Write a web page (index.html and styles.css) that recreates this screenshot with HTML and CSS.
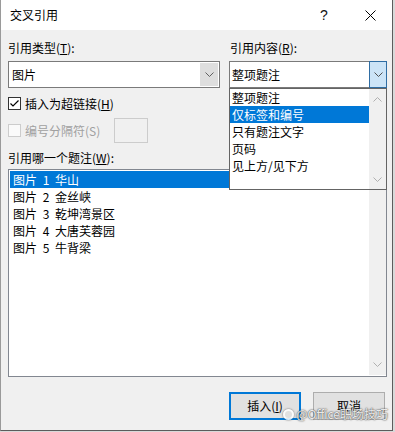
FILE: index.html
```html
<!DOCTYPE html>
<html lang="zh-CN">
<head>
<meta charset="utf-8">
<title>交叉引用</title>
<link rel="stylesheet" href="styles.css">
</head>
<body>
<div class="dialog">
  <div class="titlebar">
    <span class="title">交叉引用</span>
    <span class="tb-btn help">?</span>
    <span class="tb-btn close"><svg width="11" height="11" viewBox="0 0 11 11"><path d="M0.5 0.5 L10.5 10.5 M10.5 0.5 L0.5 10.5" stroke="#000" stroke-width="1" fill="none"/></svg></span>
  </div>
  <div class="content">
    <div class="top-grid">
      <div class="field">
        <div class="label">引用类型(<u>T</u>):</div>
        <div class="combo">
          <span class="combo-text">图片</span>
          <span class="combo-btn"><svg width="9" height="5" viewBox="0 0 9 5"><path d="M0.5 0.5 L4.5 4.5 L8.5 0.5" stroke="#606060" fill="none"/></svg></span>
        </div>
      </div>
      <div class="field">
        <div class="label">引用内容(<u>R</u>):</div>
        <div class="combo open">
          <span class="combo-text">整项题注</span>
          <span class="combo-btn pressed"><svg width="9" height="5" viewBox="0 0 9 5"><path d="M0.5 0.5 L4.5 4.5 L8.5 0.5" stroke="#505050" fill="none"/></svg></span>
          <div class="dropdown">
            <ul class="items">
              <li>整项题注</li>
              <li class="sel">仅标签和编号</li>
              <li>只有题注文字</li>
              <li>页码</li>
              <li>见上方/见下方</li>
            </ul>
            <div class="vscroll dd-scroll">
              <span class="sb-arrow"><svg width="9" height="5" viewBox="0 0 9 5"><path d="M0.5 4.5 L4.5 0.5 L8.5 4.5" stroke="#b0b0b0" fill="none"/></svg></span>
              <span class="sb-arrow"><svg width="9" height="5" viewBox="0 0 9 5"><path d="M0.5 0.5 L4.5 4.5 L8.5 0.5" stroke="#b0b0b0" fill="none"/></svg></span>
            </div>
          </div>
        </div>
      </div>
    </div>

    <div class="check-row">
      <span class="cb checked"><svg width="11" height="11" viewBox="0 0 11 11"><path d="M1.5 5.5 L4 8 L9.5 2.5" stroke="#000" stroke-width="1.2" fill="none"/></svg></span>
      <span class="cb-label">插入为超链接(<u>H</u>)</span>
    </div>
    <div class="check-row sep-row disabled">
      <span class="cb"></span>
      <span class="cb-label">编号分隔符(S)</span>
      <span class="sep-box"></span>
    </div>

    <div class="label list-label">引用哪一个题注(<u>W</u>):</div>
    <div class="listbox">
      <ul class="items">
        <li class="sel">图片 1 华山</li>
        <li>图片 2 金丝峡</li>
        <li>图片 3 乾坤湾景区</li>
        <li>图片 4 大唐芙蓉园</li>
        <li>图片 5 牛背梁</li>
      </ul>
      <div class="vscroll list-scroll">
        <span class="sb-arrow"><svg width="9" height="5" viewBox="0 0 9 5"><path d="M0.5 4.5 L4.5 0.5 L8.5 4.5" stroke="#b0b0b0" fill="none"/></svg></span>
        <span class="sb-arrow"><svg width="9" height="5" viewBox="0 0 9 5"><path d="M0.5 0.5 L4.5 4.5 L8.5 0.5" stroke="#b0b0b0" fill="none"/></svg></span>
      </div>
    </div>

    <div class="buttons">
      <button class="btn default">插入(<u>I</u>)</button>
      <button class="btn">取消</button>
    </div>
  </div>
  <div class="watermark"><span class="wm-logo"></span>@Office职场技巧</div>
</div>
</body>
</html>
```
FILE: styles.css
```css
* { box-sizing: border-box; }
html, body { margin: 0; padding: 0; }
body {
  width: 395px;
  height: 432px;
  overflow: hidden;
  background: #d9d9d9;
  font-family: "Noto Sans CJK SC", "Microsoft YaHei", sans-serif;
  font-size: 12px;
  color: #000;
}
u { text-decoration: underline; text-underline-offset: 1px; }

.dialog {
  position: relative;
  width: 393px;
  height: 431px;
  background: #f0f0f0;
  border-left: 1px solid #9a9a9a;
  border-right: 1px solid #5c5c5c;
  border-bottom: 1px solid #5c5c5c;
  display: flex;
  flex-direction: column;
}

.titlebar {
  height: 30px;
  background: #fff;
  display: flex;
  align-items: center;
  flex: none;
}
.title { padding-left: 9px; font-size: 12px; line-height: 16px; }
.tb-btn {
  width: 46px;
  height: 30px;
  display: flex;
  align-items: center;
  justify-content: center;
}
.help { margin-left: auto; font-size: 14px; font-family: "Liberation Sans", sans-serif; color: #111; }
.close { margin-right: -1px; }

.content {
  padding: 10px 0 0 7px;
  width: 386px;
  display: flex;
  flex-direction: column;
}

.label { line-height: 16px; height: 16px; white-space: nowrap; }

.top-grid {
  display: grid;
  grid-template-columns: 212px 158px;
  column-gap: 9px;
}
.field { display: flex; flex-direction: column; }
.field:last-child .label { padding-left: 1px; }

.combo {
  position: relative;
  margin-top: 5px;
  height: 27px;
  border: 1px solid #7a7a7a;
  background: #fff;
  display: flex;
  align-items: stretch;
}
.combo-text { flex: 1; padding-left: 3px; line-height: 25px; }
.combo.open .combo-text { padding-left: 2px; }
.combo-btn {
  width: 18px;
  margin: 1px 1px 1px 0;
  background: #dedede;
  display: flex;
  align-items: center;
  justify-content: center;
}
.combo-btn.pressed {
  width: 18px;
  margin: -1px -1px -1px 0;
  background: #cce4f7;
  border: 1px solid #2f6da3;
}

.dropdown {
  position: absolute;
  top: 26px;
  left: -1px;
  width: 158px;
  height: 102px;
  background: #fff;
  border: 1px solid #646464;
  display: flex;
  z-index: 5;
}
.items { list-style: none; margin: 0; padding: 0; flex: 1; }
.items li { height: 17px; line-height: 17px; white-space: nowrap; }
.dropdown .items li { padding-left: 2px; }
.items li.sel { background: #0078d7; color: #fff; }

.vscroll {
  width: 17px;
  background: #f0f0f0;
  display: flex;
  flex-direction: column;
  justify-content: space-between;
  align-items: center;
}
.dd-scroll { padding: 8px 0 7px; }
.list-scroll { padding: 7px 0 8px; }
.sb-arrow { display: flex; width: 9px; height: 5px; }

.check-row {
  display: flex;
  align-items: center;
  height: 17px;
  margin-top: 7px;
}
.cb {
  width: 13px;
  height: 13px;
  border: 1px solid #333;
  background: #fff;
  display: flex;
  align-items: center;
  justify-content: center;
  flex: none;
}
.cb-label { margin-left: 4px; line-height: 16px; white-space: nowrap; }
.sep-row {
  height: 25px;
  margin-top: 6px;
  display: grid;
  grid-template-columns: 13px 85px 34px;
  column-gap: 4px;
  align-items: center;
}
.sep-row .cb-label { margin-left: 0; }
.disabled { color: #a0a0a0; }
.disabled .cb { border-color: #cccccc; background: #fafafa; }
.sep-box {
  height: 25px;
  border: 1px solid #cccccc;
  background: #f0f0f0;
}

.list-label { margin-top: 7px; }

.listbox {
  margin-top: 3px;
  width: 379px;
  height: 208px;
  border: 1px solid #828790;
  background: #fff;
  padding: 1px 0 1px 1px;
  display: flex;
}
.listbox .items li { padding-left: 3px; word-spacing: 3px; }

.buttons {
  margin-top: 15px;
  width: 377px;
  display: flex;
  justify-content: flex-end;
  gap: 12px;
}
.btn {
  width: 72px;
  height: 28px;
  background: #e1e1e1;
  border: 1px solid #adadad;
  font-family: "Noto Sans CJK SC", sans-serif;
  font-size: 12px;
  color: #000;
  padding: 0;
  line-height: 16px;
}
.btn.default { border: 2px solid #0078d7; }

.watermark {
  position: absolute;
  right: 4px;
  bottom: 9px;
  display: flex;
  align-items: center;
  gap: 2px;
  font-size: 12px;
  line-height: 14px;
  color: rgba(255,255,255,0.9);
  text-shadow: 0 0 2px rgba(60,60,60,0.9), 0 0 1px rgba(60,60,60,0.9);
}
.wm-logo {
  width: 11px;
  height: 11px;
  border-radius: 50%;
  border: 2px solid rgba(255,255,255,0.85);
  box-shadow: 0 0 2px rgba(60,60,60,0.8);
}
```
